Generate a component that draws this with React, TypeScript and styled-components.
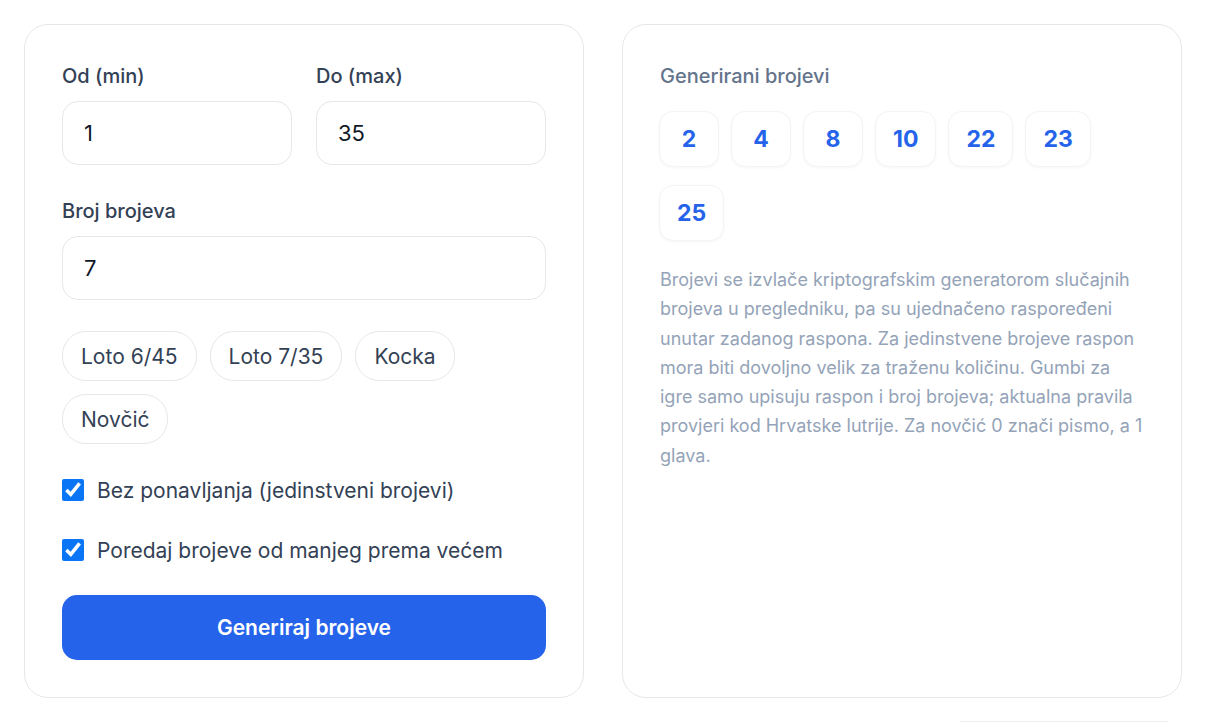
import React, { useState } from "react";
import styled, { createGlobalStyle } from "styled-components";

const Global = createGlobalStyle`
  * { box-sizing: border-box; }
  html, body { margin: 0; padding: 0; background: #ffffff; }
  body { font-family: Inter, "Noto Sans", Arial, sans-serif; color: #334155; -webkit-font-smoothing: antialiased; }
`;

const Page = styled.div`
  padding: 24px 24px 0 24px;
`;

const Grid = styled.div`
  display: grid;
  grid-template-columns: 1fr 1fr;
  gap: 38px;
`;

const Card = styled.section`
  background: #ffffff;
  border: 1px solid #e5e7eb;
  border-radius: 24px;
  padding: 37px;
  display: flex;
  flex-direction: column;
`;

const TwoCols = styled.div`
  display: grid;
  grid-template-columns: 1fr 1fr;
  gap: 24px;
`;

const Field = styled.div<{ $mt?: number }>`
  display: flex;
  flex-direction: column;
  margin-top: ${(p) => p.$mt ?? 0}px;
`;

const Label = styled.label`
  font-size: 20px;
  line-height: 28px;
  font-weight: 500;
  color: #334155;
  margin-bottom: 11px;
`;

const Input = styled.input`
  height: 64px;
  width: 100%;
  border: 1px solid #e5e7eb;
  border-radius: 16px;
  padding: 0 21px;
  font-family: inherit;
  font-size: 22px;
  color: #111827;
  background: #ffffff;
  outline: none;
`;

const Presets = styled.div`
  display: flex;
  flex-wrap: wrap;
  gap: 13px 13px;
  margin-top: 31px;
`;

const Pill = styled.button`
  height: 50px;
  padding: 0 18px;
  border: 1px solid #e5e7eb;
  border-radius: 24px;
  background: #ffffff;
  font-family: inherit;
  font-size: 21px;
  color: #334155;
  cursor: pointer;
`;

const CheckRow = styled.label<{ $mt: number }>`
  display: flex;
  align-items: center;
  gap: 13px;
  height: 30px;
  margin-top: ${(p) => p.$mt}px;
  font-size: 21px;
  color: #334155;
  cursor: pointer;
`;

const Check = styled.input`
  width: 22px;
  height: 22px;
  margin: 0;
  accent-color: #0b76f5;
`;

const PrimaryButton = styled.button`
  margin-top: 30px;
  height: 65px;
  width: 100%;
  border: none;
  border-radius: 15px;
  background: #2563eb;
  color: #ffffff;
  font-family: inherit;
  font-size: 21px;
  font-weight: 600;
  cursor: pointer;
`;

const ResultTitle = styled.h2`
  margin: 0;
  font-size: 20px;
  line-height: 28px;
  font-weight: 500;
  color: #64748b;
`;

const Numbers = styled.div`
  display: flex;
  flex-wrap: wrap;
  gap: 18px 12px;
  margin-top: 21px;
  margin-left: -1px;
`;

const NumberChip = styled.div`
  min-width: 60px;
  height: 56px;
  padding: 0 17px;
  display: flex;
  align-items: center;
  justify-content: center;
  border: 1px solid #f3f4f6;
  border-radius: 14px;
  background: #ffffff;
  box-shadow: 0 1px 3px rgba(15, 23, 42, 0.04);
  font-size: 23px;
  font-weight: 700;
  color: #2563eb;
`;

const Note = styled.p`
  margin: 24px 0 0 0;
  font-size: 18px;
  line-height: 29.3px;
  color: #94a3b8;
`;

const Below = styled.div`
  display: flex;
  justify-content: flex-end;
  margin-top: 23px;
  padding-right: 14px;
`;

const BelowBox = styled.div`
  width: 208px;
  height: 20px;
  border-top: 1px solid #eceef1;
`;

const numbers = [2, 4, 8, 10, 22, 23, 25];

export default function App() {
  const [min, setMin] = useState("1");
  const [max, setMax] = useState("35");
  const [count, setCount] = useState("7");
  const [unique, setUnique] = useState(true);
  const [sorted, setSorted] = useState(true);

  return (
    <>
      <Global />
      <Page>
        <Grid>
          <Card>
            <TwoCols>
              <Field>
                <Label>Od (min)</Label>
                <Input value={min} onChange={(e) => setMin(e.target.value)} />
              </Field>
              <Field>
                <Label>Do (max)</Label>
                <Input value={max} onChange={(e) => setMax(e.target.value)} />
              </Field>
            </TwoCols>
            <Field $mt={32}>
              <Label>Broj brojeva</Label>
              <Input value={count} onChange={(e) => setCount(e.target.value)} />
            </Field>
            <Presets>
              <Pill>Loto 6/45</Pill>
              <Pill>Loto 7/35</Pill>
              <Pill>Kocka</Pill>
              <Pill>Novčić</Pill>
            </Presets>
            <CheckRow $mt={31}>
              <Check type="checkbox" checked={unique} onChange={(e) => setUnique(e.target.checked)} />
              Bez ponavljanja (jedinstveni brojevi)
            </CheckRow>
            <CheckRow $mt={30}>
              <Check type="checkbox" checked={sorted} onChange={(e) => setSorted(e.target.checked)} />
              Poredaj brojeve od manjeg prema većem
            </CheckRow>
            <PrimaryButton>Generiraj brojeve</PrimaryButton>
          </Card>
          <Card>
            <ResultTitle>Generirani brojevi</ResultTitle>
            <Numbers>
              {numbers.map((n) => (
                <NumberChip key={n}>{n}</NumberChip>
              ))}
            </Numbers>
            <Note>
              Brojevi se izvlače kriptografskim generatorom slučajnih brojeva u pregledniku, pa su
              ujednačeno raspoređeni unutar zadanog raspona. Za jedinstvene brojeve raspon mora biti
              dovoljno velik za traženu količinu. Gumbi za igre samo upisuju raspon i broj brojeva;
              aktualna pravila provjeri kod Hrvatske lutrije. Za novčić 0 znači pismo, a 1 glava.
            </Note>
          </Card>
        </Grid>
        <Below>
          <BelowBox />
        </Below>
      </Page>
    </>
  );
}
